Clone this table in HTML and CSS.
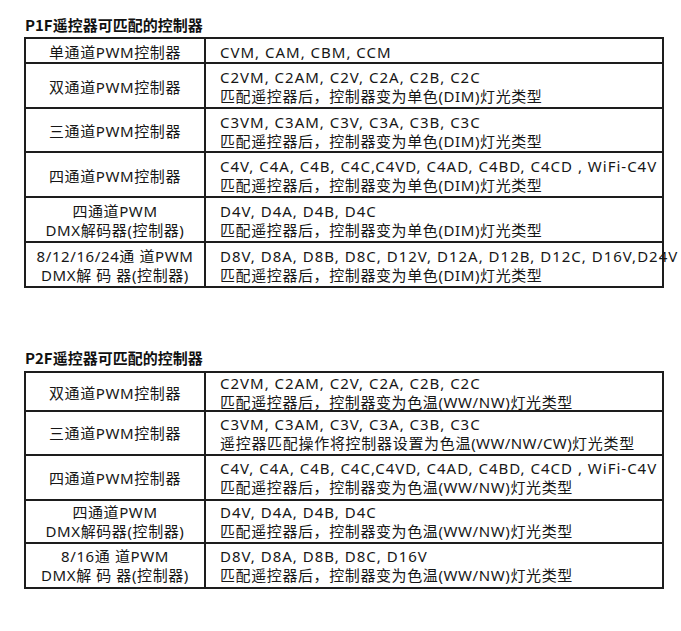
FILE: index.html
```html
<!DOCTYPE html>
<html lang="zh-CN">
<head>
<meta charset="utf-8">
<title>遥控器可匹配的控制器</title>
<link rel="stylesheet" href="styles.css">
</head>
<body>
<div class="page">
  <h2 class="title t1">P1F遥控器可匹配的控制器</h2>
  <div class="tbl tbl1">
    <div class="row h23">
      <div class="c1">单通道PWM控制器</div>
      <div class="c2"><span class="en">CVM, CAM, CBM, CCM</span></div>
    </div>
    <div class="row h43">
      <div class="c1">双通道PWM控制器</div>
      <div class="c2"><span class="en">C2VM, C2AM, C2V, C2A, C2B, C2C</span><span>匹配遥控器后，控制器变为单色(DIM)灯光类型</span></div>
    </div>
    <div class="row h42">
      <div class="c1">三通道PWM控制器</div>
      <div class="c2"><span class="en">C3VM, C3AM, C3V, C3A, C3B, C3C</span><span>匹配遥控器后，控制器变为单色(DIM)灯光类型</span></div>
    </div>
    <div class="row h43">
      <div class="c1">四通道PWM控制器</div>
      <div class="c2"><span class="en">C4V, C4A, C4B, C4C,C4VD, C4AD, C4BD, C4CD , WiFi-C4V</span><span>匹配遥控器后，控制器变为单色(DIM)灯光类型</span></div>
    </div>
    <div class="row h43">
      <div class="c1"><span>四通道PWM</span><span>DMX解码器(控制器)</span></div>
      <div class="c2"><span class="en">D4V, D4A, D4B, D4C</span><span>匹配遥控器后，控制器变为单色(DIM)灯光类型</span></div>
    </div>
    <div class="row h43">
      <div class="c1"><span>8/12/16/24通 道PWM</span><span>DMX解 码 器(控制器)</span></div>
      <div class="c2"><span class="en">D8V, D8A, D8B, D8C, D12V, D12A, D12B, D12C, D16V,D24V</span><span>匹配遥控器后，控制器变为单色(DIM)灯光类型</span></div>
    </div>
  </div>

  <h2 class="title t2">P2F遥控器可匹配的控制器</h2>
  <div class="tbl tbl2">
    <div class="row h37">
      <div class="c1">双通道PWM控制器</div>
      <div class="c2"><span class="en">C2VM, C2AM, C2V, C2A, C2B, C2C</span><span>匹配遥控器后，控制器变为色温(WW/NW)灯光类型</span></div>
    </div>
    <div class="row h42">
      <div class="c1">三通道PWM控制器</div>
      <div class="c2"><span class="en">C3VM, C3AM, C3V, C3A, C3B, C3C</span><span class="spread">遥控器匹配操作将控制器设置为色温<span class="nospread">(WW/NW/CW)</span>灯光类型</span></div>
    </div>
    <div class="row h43">
      <div class="c1">四通道PWM控制器</div>
      <div class="c2"><span class="en">C4V, C4A, C4B, C4C,C4VD, C4AD, C4BD, C4CD , WiFi-C4V</span><span>匹配遥控器后，控制器变为色温(WW/NW)灯光类型</span></div>
    </div>
    <div class="row h41">
      <div class="c1"><span>四通道PWM</span><span>DMX解码器(控制器)</span></div>
      <div class="c2"><span class="en">D4V, D4A, D4B, D4C</span><span>匹配遥控器后，控制器变为色温(WW/NW)灯光类型</span></div>
    </div>
    <div class="row h43">
      <div class="c1"><span>8/16通 道PWM</span><span>DMX解 码 器(控制器)</span></div>
      <div class="c2"><span class="en">D8V, D8A, D8B, D8C, D16V</span><span>匹配遥控器后，控制器变为色温(WW/NW)灯光类型</span></div>
    </div>
  </div>
</div>
</body>
</html>
```

FILE: styles.css
```css
html, body {
  margin: 0;
  padding: 0;
  background: #ffffff;
}

body {
  font-family: "Noto Sans", "Noto Sans CJK SC", sans-serif;
  color: #161616;
  font-size: 15px;
}

.page {
  padding-left: 24px;
}

.title {
  margin: 0;
  font-family: "Noto Sans CJK SC", sans-serif;
  font-size: 15px;
  font-weight: 700;
  line-height: 20px;
  padding-left: 1px;
  color: #111;
}

.t1 { margin-top: 15px; }
.t2 { margin-top: 60px; }

.tbl {
  width: 640px;
  box-sizing: border-box;
  border: 2px solid #1d1d1d;
}

.tbl1 { margin-top: 2px; }
.tbl2 { margin-top: 3px; }

.row {
  display: grid;
  grid-template-columns: 180px 1fr;
}

.row + .row {
  border-top: 2px solid #1d1d1d;
}

.h23 { height: 23px; }
.h37 { height: 37px; }
.h41 { height: 41px; }
.h42 { height: 42px; }
.h43 { height: 43px; }

.c1, .c2 {
  display: flex;
  flex-direction: column;
  justify-content: center;
  white-space: nowrap;
  line-height: 19px;
  padding-top: 3px;
  letter-spacing: 0.6px;
}

.tbl2 .c1, .tbl2 .c2 {
  padding-top: 1px;
}

.c1 {
  border-right: 2px solid #1d1d1d;
  align-items: center;
  text-align: center;
}

.c2 {
  padding-left: 14px;
  overflow: visible;
}

.en {
  letter-spacing: 1px;
}

.spread {
  letter-spacing: 0.7px;
}

.nospread {
  letter-spacing: 0.4px;
}
```
